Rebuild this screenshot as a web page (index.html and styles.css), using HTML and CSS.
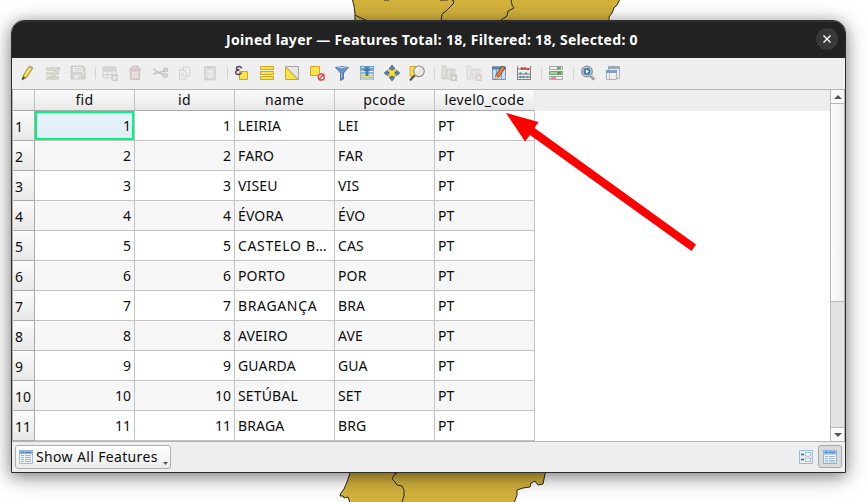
FILE: index.html
```html
<!DOCTYPE html>
<html lang="en">
<head>
<meta charset="utf-8">
<title>Joined layer</title>
<link rel="stylesheet" href="styles.css">
</head>
<body>
<svg class="map" width="867" height="502" viewBox="0 0 867 502">
  <g fill="#d3b23c" stroke="#29281f" stroke-width="1">
    <path d="M352.500 0L354 6L355 14V25H609V17L612 13L614 8L617 5L620-1H352z"/>
    <path fill="none" d="M355 15L361 18L368 21M440 0H447L450-1L454 1L453 4L450 7L446 11L442 14L441 22M511-1L512 5L514 8L508 11L507 16L501 20M384 0H389"/>
    <path d="M351 470L347 482L344 489L341 493L340 496L343 496L344 498L348 497L350 503H514L517 495V490L523 488L530 487L531 483L535 481L538 485L543 484L545 474L547 470z"/>
    <path fill="none" d="M398 472L394 475L392 479L395 482L397 485L402 486L404 490L404 496L402 502M394 473L397 473"/>
  </g>
</svg>
<main class="window">
  <header class="titlebar"><h1>Joined layer — Features Total: 18, Filtered: 18, Selected: 0</h1>
    <button class="close" aria-label="Close"><svg width="10" height="10" viewBox="0 0 10 10"><path d="M1.500 1.500L8.500 8.500M8.500 1.500L1.500 8.500" stroke="#fff" stroke-width="1.400"/></svg></button>
  </header>
  <nav class="toolbar">
    <svg viewBox="0 0 16 16"><path d="M2 15L3.500 10L9 1.500L12.500 3.500L7 12z" fill="#e8cf3c" stroke="#8b7c2c" stroke-width=".8"/><path d="M5 11L10.500 3" stroke="#fff399" stroke-width="1.200"/><path d="M9 1.500L10 .500L13 2.300L12.500 3.500z" fill="#b7a58b"/><path d="M2 15L3 11.500L5.500 13z" fill="#444"/></svg>
    <svg class="off" viewBox="0 0 16 16"><path d="M1 2H15V6H1zM1 7H14V10H1zM1 11H14V15H1z" fill="#b6b3a1"/><path d="M7 12L13 4" stroke="#dddbd0" stroke-width="3.500"/><path d="M5.500 13.500L7 10L13 2L15 4L9 12z" fill="#c5b8a6" stroke="#91877a" stroke-width=".7"/></svg>
    <svg class="off" viewBox="0 0 16 16"><path d="M1 1H13L15 3V14H1z" fill="#aaaeb1" stroke="#92969a"/><path d="M3 2H12V7H3z" fill="#e8e8e8"/><path d="M4 10H11V14H4z" fill="#ddd"/><path d="M7 13L14 6L16 8L9 15z" fill="#c4bba8"/><path d="M4 3.500H11M4 5.500H11" stroke="#aaa"/></svg>
    <i class="sep"></i>
    <svg class="off" viewBox="0 0 16 16"><path d="M1 2H14V6H1z" fill="#bbb" stroke="#999"/><path d="M1 6H14V13H1z" fill="#eee" stroke="#aaa"/><path d="M5 2V13M10 2V13M1 9.500H14" stroke="#aaa"/><path d="M9.500 9.500H16V16H9.500z" fill="#aaa59b"/><path d="M12.700 10.500V15M10.500 12.700H15" stroke="#fff"/></svg>
    <svg class="off" viewBox="0 0 16 16"><path d="M2 4H14M5.500 3V1.500H10.500V3" fill="none" stroke="#a47b78" stroke-width="1.600"/><path d="M3 5.500H13L12.300 14.500H3.700z" fill="#c5a19e" stroke="#ab8582"/><path d="M6 7V13M8 7V13M10 7V13" stroke="#eee"/></svg>
    <svg class="off" viewBox="0 0 16 16" fill="none" stroke="#87867f" stroke-width="1.400"><path d="M1 4L11 10M1 9L13 6"/><ellipse cx="13" cy="10.500" rx="2.300" ry="1.500"/><ellipse cx="13.500" cy="5" rx="2" ry="1.500"/></svg>
    <svg class="off" viewBox="0 0 16 16" fill="#eee" stroke="#aaa"><path d="M6 2H11L13 4V11H6z"/><path d="M2.500 5H7L9 7V14H2.500z"/><path d="M4 9H7M4 11H7"/></svg>
    <svg class="off" viewBox="0 0 16 16"><path d="M3 2H13V14.500H3z" fill="#ddd" stroke="#a5a39b" stroke-width="1.500"/><path d="M5 5H11V13H5z" fill="#f3f3f3" stroke="#bbb"/><path d="M5 1H11V4H5z" fill="#aaa"/><path d="M6 8H10M6 10H10" stroke="#bbb"/></svg>
    <i class="sep"></i>
    <svg viewBox="0 0 16 16"><path d="M5.500 6.500H13.500V14.500H5.500z" fill="#f8e445" stroke="#cca62b"/><path d="M7.500 3.500C7 .500 2.500 1 2.500 3.200C2.500 4.800 4 5 5.500 5C2.500 5 1.200 6.500 1.800 8.200C2.500 10 6.500 10 7.500 7.500" fill="none" stroke="#543b65" stroke-width="1.500"/></svg>
    <svg viewBox="0 0 16 16" fill="#fae345" stroke="#caa92d"><path d="M1.500 1.500H14.500V4.500H1.500zM1.500 6.500H14.500V9.500H1.500zM1.500 11.500H14.500V14.500H1.500z"/></svg>
    <svg viewBox="0 0 16 16"><path d="M1.500 1.500H14.500V14.500z" fill="#e5e5e5" stroke="#a7a7a7"/><path d="M1.500 2V14.500H14z" fill="#f8e445" stroke="#cca62b"/></svg>
    <svg viewBox="0 0 16 16"><path d="M1.500 1.500H10.500V10.500H1.500z" fill="#f8e445" stroke="#cca62b"/><path d="M9 8H16V16H9z" fill="#f1c9c9"/><circle cx="12.200" cy="12" r="3" fill="#fff" stroke="#dc4a4e" stroke-width="1.400"/><path d="M10.200 14L14.200 10" stroke="#dc4a4e" stroke-width="1.400"/></svg>
    <svg viewBox="0 0 16 16"><path d="M1.500 2.500Q8 .800 14.500 2.500L9.500 8V14L6.500 15.500V8z" fill="#6593c4" stroke="#426991" stroke-width=".8"/><path d="M2.500 2.500Q8 3.800 13.500 2.500Q8 1.300 2.500 2.500" fill="#e2d873"/><path d="M7.500 8V13" stroke="#98bbdc"/></svg>
    <svg viewBox="0 0 16 16"><path d="M1 1H15V15H1z" fill="#91b5d6"/><path d="M1 1H15V4.500H1z" fill="#6d9bc8"/><path d="M2 2.500H5M11 2.500H14" stroke="#dce8f4"/><path d="M2 6.500H14M2 9.500H14M2 14H14" stroke="#d8e7f3"/><path d="M2 11.500H14" stroke="#eee16a" stroke-width="2"/><path d="M8 2L12 6H9.500V11H6.500V6H4z" fill="#4479aa"/></svg>
    <svg viewBox="0 0 16 16"><path d="M5 4.500H11V11.500H5z" fill="#f8df35" stroke="#d3ac27"/><path d="M8 0L11 3.500H9V5H7V3.500H5zM8 16L5 12.500H7V11H9V12.500H11zM0 8L3.500 5V7H5V9H3.500V11zM16 8L12.500 11V9H11V7H12.500V5z" fill="#4d7fae" stroke="#3b6288" stroke-width=".5"/></svg>
    <svg viewBox="0 0 16 16"><path d="M1 1.500H8V11H1z" fill="#f8df45" stroke="#d3ac27"/><path d="M5.500 10.500L1 15.500" stroke="#554b3e" stroke-width="2"/><circle cx="10" cy="6.300" r="5.300" fill="#e9e8df" stroke="#8e8c82" stroke-width="1.100"/><path d="M7 5Q8 2.500 11 3" fill="none" stroke="#fff" stroke-width="1.500"/></svg>
    <i class="sep"></i>
    <svg class="off" viewBox="0 0 16 16"><path d="M1 1H5V14H1zM6 4H10V14H6zM11 4H14V10H11z" fill="#ccc" stroke="#a1a198"/><path d="M9.500 9.500H16V16H9.500z" fill="#9e9c88"/><path d="M12.700 10.500V15M10.500 12.700H15" stroke="#fff"/></svg>
    <svg class="off" viewBox="0 0 16 16"><path d="M1 1H5V14H1zM6 4H10V14H6zM11 4H14V10H11z" fill="#ddd" stroke="#b8b8b8"/><path d="M9.500 9.500H16V16H9.500z" fill="#bca8a5"/><path d="M11 11L14.500 14.500M14.500 11L11 14.500" stroke="#fff"/></svg>
    <svg viewBox="0 0 16 16"><path d="M1.500 2H14.500V14.500H1.500z" fill="#c7dcef" stroke="#6f9bc4"/><path d="M1 1.500H15V4.500H1z" fill="#5585b7"/><path d="M5.500 4V14M10.500 4V14" stroke="#7aa4cb"/><path d="M4 14.500L5 10L11 1L14 3L8 12z" fill="#e58036" stroke="#784329" stroke-width=".8"/><path d="M4 14.500L4.800 11L7.300 12.700z" fill="#f1d1a6"/></svg>
    <svg viewBox="0 0 16 16"><path d="M1.500 1V15M14.500 1V15M1 14.500H15M2 4H14M2 9H14M2 12H14" fill="none" stroke="#88847b"/><g fill="#cf4249"><circle cx="6" cy="3.500" r="1.500"/><circle cx="9" cy="3.500" r="1.500"/><circle cx="12" cy="4" r="1.300"/></g><g fill="#658db0"><circle cx="4.500" cy="8.500" r="1.300"/><circle cx="10" cy="8.500" r="1.300"/><circle cx="4.500" cy="12" r="1.300"/><circle cx="7.500" cy="12" r="1.300"/><circle cx="11.500" cy="12" r="1.300"/></g></svg>
    <i class="sep"></i>
    <svg viewBox="0 0 16 16"><path d="M1.500 1.500H14.500V4.500H1.500zM1.500 11.500H14.500V14.500H1.500z" fill="#eee" stroke="#aaa"/><path d="M1.500 6.500H14.500V9.500H1.500z" fill="#9ed5a0" stroke="#77a67d"/><path d="M9 3H13M9 8H13" stroke="#438751" stroke-width="1.300"/><path d="M3 13H8" stroke="#ed626b" stroke-width="1.300"/></svg>
    <i class="sep"></i>
    <svg viewBox="0 0 16 16"><path d="M10.500 10.500L14.500 14.500" stroke="#8a8a82" stroke-width="3"/><circle cx="7" cy="6.500" r="5.300" fill="#d5e2ef" stroke="#959a9f" stroke-width="1.500"/><circle cx="7" cy="6.500" r="3.700" fill="#477eb2"/><path d="M6 4.500L9 6.500L6 8.500z" fill="#fff"/><path d="M11 10L15 14" stroke="#eee"/></svg>
    <svg viewBox="0 0 16 16"><path d="M3.500 1.500H14.500V13.500H3.500z" fill="#e9e9e9" stroke="#aeb3b8"/><path d="M3 1H15V4H3z" fill="#9cabb9"/><path d="M1.500 5.500H11.500V14.500H1.500z" fill="#eee" stroke="#a9b2bb"/><path d="M1 5H12V8H1z" fill="#7fa0c1"/><path d="M4.500 8V14" stroke="#b8c4cf"/></svg>
  </nav>
  <section class="view">
    <table>
      <colgroup><col class="num"><col><col><col><col><col></colgroup>
      <thead><tr><th></th><th>fid</th><th>id</th><th>name</th><th>pcode</th><th>level0_code</th></tr></thead>
      <tbody>
        <tr><th>1</th><td class="r current">1</td><td class="r">1</td><td>LEIRIA</td><td>LEI</td><td>PT</td></tr>
        <tr><th>2</th><td class="r">2</td><td class="r">2</td><td>FARO</td><td>FAR</td><td>PT</td></tr>
        <tr><th>3</th><td class="r">3</td><td class="r">3</td><td>VISEU</td><td>VIS</td><td>PT</td></tr>
        <tr><th>4</th><td class="r">4</td><td class="r">4</td><td>ÉVORA</td><td>ÉVO</td><td>PT</td></tr>
        <tr><th>5</th><td class="r">5</td><td class="r">5</td><td class="wide">CASTELO B…</td><td>CAS</td><td>PT</td></tr>
        <tr><th>6</th><td class="r">6</td><td class="r">6</td><td>PORTO</td><td>POR</td><td>PT</td></tr>
        <tr><th>7</th><td class="r">7</td><td class="r">7</td><td class="wide">BRAGANÇA</td><td>BRA</td><td>PT</td></tr>
        <tr><th>8</th><td class="r">8</td><td class="r">8</td><td>AVEIRO</td><td>AVE</td><td>PT</td></tr>
        <tr><th>9</th><td class="r">9</td><td class="r">9</td><td>GUARDA</td><td>GUA</td><td>PT</td></tr>
        <tr><th>10</th><td class="r">10</td><td class="r">10</td><td>SETÚBAL</td><td>SET</td><td>PT</td></tr>
        <tr><th>11</th><td class="r">11</td><td class="r">11</td><td>BRAGA</td><td>BRG</td><td>PT</td></tr>
      </tbody>
    </table>
    <div class="blank"></div>
    <div class="scroll">
      <div class="step up"><svg width="8" height="4" viewBox="0 0 8 4"><path d="M0 4L4 0L8 4z" fill="#555"/></svg></div>
      <div class="thumb"></div>
      <div class="track"></div>
      <div class="step down"><svg width="8" height="4" viewBox="0 0 8 4"><path d="M0 0H8L4 4z" fill="#555"/></svg></div>
    </div>
  </section>
  <footer class="statusbar">
    <button class="filter">
      <svg class="grid" width="14" height="14" viewBox="0 0 14 14"><path d="M.500 .500H13.500V13.500H.500z" fill="#edf2f7" stroke="#9abbdc"/><path d="M0 0H14V4H0z" fill="#8eb5dd"/><path d="M2 2.500H5M6 2.500H12" stroke="#5688ba"/><path d="M2 5.500H5M6 5.500H12M2 7.500H5M6 7.500H12M2 9.500H5M6 9.500H12M2 11.500H5M6 11.500H12" stroke="#a9b5c1"/></svg>
      <span>Show All Features</span>
      <svg class="drop" width="5" height="3" viewBox="0 0 5 3"><path d="M0 0H5L2.500 3z" fill="#555"/></svg>
    </button>
    <div class="modes">
      <button class="mode"><svg width="14" height="14" viewBox="0 0 14 14"><path d="M.500 .500H13.500V13.500H.500z" fill="#e6edf4" stroke="#9abbdc"/><path d="M2 4.500H5M2 9.500H5" stroke="#44617e" stroke-width="1.400"/><path d="M6.500 2.500H11.500V6H6.500zM6.500 8H11.500V11.500H6.500z" fill="#fff" stroke="#9fbfdc"/></svg></button>
      <button class="mode on"><svg width="14" height="14" viewBox="0 0 14 14"><path d="M.500 .500H13.500V13.500H.500z" fill="#edf2f7" stroke="#8fb3d8"/><path d="M0 0H14V4.500H0z" fill="#8eb5dd"/><path d="M2 2.500H5M6 2.500H12" stroke="#5688ba"/><path d="M2 6.500H5M6 6.500H12M2 8.500H5M6 8.500H12M2 10.500H5M6 10.500H12M2 12H5M6 12H12" stroke="#a0b9d0"/></svg></button>
    </div>
  </footer>
</main>
<svg class="arrow" width="867" height="502" viewBox="0 0 867 502"><path d="M506 113L538.500 122L534.500 128L696 244.500L691.500 251L530 135L525 141.500z" fill="#f00"/></svg>
</body>
</html>
```

FILE: styles.css
```css
* { box-sizing: border-box; }
body { margin: 0; width: 867px; height: 502px; overflow: hidden; padding: 20px 0 0 11px; background: #fff; color: #0c0c0c; font: 14px "Noto Sans", sans-serif; }
svg { display: block; flex: none; }
button { font: inherit; color: inherit; margin: 0; padding: 0; border: 0; }
.map, .arrow { position: absolute; left: 0; top: 0; pointer-events: none; }
.window { position: relative; width: 835px; height: 453px; display: flex; flex-direction: column; border: 1px solid #2c2c2c; border-radius: 13px 13px 0 0; background: #eee; box-shadow: 0 3px 15px rgba(0,0,0,.42), 0 5px 28px rgba(0,0,0,.18); overflow: hidden; }
.titlebar { height: 37px; flex: none; display: flex; align-items: center; padding: 0 7px 2px 31px; background: #222; color: #fff; box-shadow: inset 0 1px #2f3331; }
.titlebar h1 { flex: 1; margin: 0; padding: 2px 0 0 5px; font-size: 14px; font-weight: 700; text-align: center; letter-spacing: .3px; white-space: nowrap; }
.close { width: 22px; height: 22px; border-radius: 50%; background: #383838; display: flex; align-items: center; justify-content: center; }
.toolbar { height: 31px; flex: none; display: flex; align-items: center; gap: 9px; padding: 0 8px 1px; background: #efefef; }
.toolbar svg { width: 16px; height: 16px; }
.toolbar .off { opacity: .42; }
.sep { width: 1px; height: 12px; margin-right: -3px; background: #d2d2d2; }
.view { height: 353px; flex: none; display: flex; border: 1px solid #b4b4b4; background: #fff; }
table { width: 522px; height: 351px; table-layout: fixed; border-collapse: separate; border-spacing: 0; }
col { width: 100px; }
col.num { width: 22px; }
th, td { padding: 0 3px; font-weight: 400; white-space: nowrap; line-height: 20px; border-right: 1px solid #c3c3c3; border-bottom: 1px solid #c3c3c3; }
thead th { height: 21px; padding: 0; letter-spacing: .4px; border-bottom-color: #aaa; background: linear-gradient(#fbfbfb, #e8e8e8); }
thead th:last-child { border-right-color: #e7e7e7; }
tbody tr { height: 30px; }
tbody tr:nth-child(even) td { background: #f6f6f6; }
tbody th { padding: 2px 0 0 2px; text-align: left; background: linear-gradient(#fbfbfb, #e8e8e8); border-color: #aaa; }
td { text-align: left; letter-spacing: .15px; }
.wide { letter-spacing: .65px; }
.r { text-align: right; letter-spacing: 0; }
.current { background: linear-gradient(#e5f4ff, #e2edf5); box-shadow: inset 0 0 0 2px #00f57c; }
.blank { flex: 1; height: 21px; background: #eee; }
.scroll { width: 14px; display: flex; flex-direction: column; border-left: 1px solid #b8b8b8; }
.step { height: 14px; display: flex; align-items: center; justify-content: center; background: #fafafa; }
.up { border-bottom: 1px solid #b8b8b8; }
.down { border-top: 1px solid #b8b8b8; }
.thumb { height: 198px; background: linear-gradient(90deg, #fcfcfc, #eee); border-bottom: 1px solid #b8b8b8; }
.track { flex: 1; background: #e3e3e3; }
.statusbar { flex: 1; display: flex; align-items: center; justify-content: space-between; padding: 0 3px 1px 3px; background: #eee; }
.filter { width: 156px; height: 24px; display: flex; align-items: center; gap: 3px; padding: 0 2px 0 3px; border: 1px solid #b0b0b0; border-radius: 3px; background: linear-gradient(#fff, #ececec); white-space: nowrap; }
.filter span { flex: 1; text-align: left; letter-spacing: .35px; }
.drop { align-self: flex-end; margin-bottom: 3px; }
.modes { display: flex; align-items: center; gap: 5px; }
.mode { display: flex; align-items: center; justify-content: center; background: none; }
.mode.on { width: 24px; height: 23px; border: 1px solid #a8a8a8; border-radius: 3px; background: #dadada; }
```
